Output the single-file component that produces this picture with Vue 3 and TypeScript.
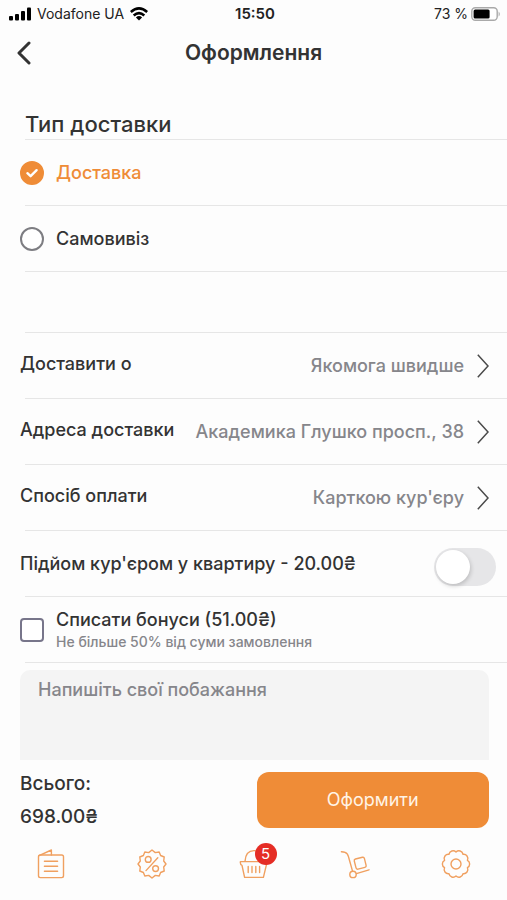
<script setup lang="ts">
import { ref } from 'vue'

interface Choice {
  id: string
  label: string
}

interface Setting {
  id: string
  label: string
  value: string
}

const deliveryTypes: Choice[] = [
  { id: 'delivery', label: 'Доставка' },
  { id: 'pickup', label: 'Самовивіз' },
]

const settings: Setting[] = [
  { id: 'time', label: 'Доставити о', value: 'Якомога швидше' },
  { id: 'address', label: 'Адреса доставки', value: 'Академика Глушко просп., 38' },
  { id: 'payment', label: 'Спосіб оплати', value: "Карткою кур'єру" },
]

const deliveryType = ref<string>('delivery')
const lift = ref<boolean>(false)
const useBonuses = ref<boolean>(false)
const wishes = ref<string>('')
const cartCount = ref<number>(5)
</script>

<template>
  <div class="screen">
    <div class="status">
      <div class="status-side">
        <svg class="signal" viewBox="0 0 22 14" width="22" height="14">
          <rect x="0" y="9" width="4" height="4.5" rx="1" />
          <rect x="6" y="7" width="4" height="6.5" rx="1" />
          <rect x="12" y="4" width="4" height="9.5" rx="1" />
          <rect x="18" y="0.5" width="4" height="13" rx="1" />
        </svg>
        <span>Vodafone UA</span>
        <svg class="wifi" viewBox="0 0 18 14" width="18" height="14">
          <path d="M0.8 5Q9 -2.2 17.2 5" />
          <path d="M3.7 8.4Q9 3.8 14.3 8.4" />
          <path class="dot" d="M5.9 10.4Q9 7.8 12.1 10.4L9 13.6Z" />
        </svg>
      </div>
      <span class="clock">15:50</span>
      <div class="status-side status-end">
        <span>73 %</span>
        <svg viewBox="0 0 30 14" width="30" height="14">
          <rect x="0.8" y="0.8" width="25.4" height="12.4" rx="3.5" fill="#fff" stroke="#a9a9a9" stroke-width="1.4" />
          <rect x="2.6" y="2.4" width="16" height="9.2" rx="1.5" fill="#000" />
          <path d="M27.6 4.4Q30 7 27.6 9.6Z" fill="#a9a9a9" />
        </svg>
      </div>
    </div>

    <header class="bar">
      <button class="back" type="button" aria-label="Назад">
        <svg viewBox="0 0 16 24" width="16" height="24">
          <path d="M13 2L3 12L13 22" />
        </svg>
      </button>
      <h1 class="title">Оформлення</h1>
    </header>

    <main class="content">
      <fieldset class="types">
        <legend class="heading">Тип доставки</legend>
        <label v-for="type in deliveryTypes" :key="type.id" class="row choice">
          <span class="mark">
            <input v-model="deliveryType" class="radio" type="radio" name="delivery-type" :value="type.id" />
            <svg v-if="deliveryType === type.id" class="tick" viewBox="0 0 24 24" width="24" height="24">
              <path d="M7.4 12.2L10.6 15.2L16.6 9.2" />
            </svg>
          </span>
          <span :class="{ active: deliveryType === type.id }">{{ type.label }}</span>
        </label>
      </fieldset>
      <div class="gap"></div>

      <button v-for="item in settings" :key="item.id" class="row setting" type="button">
        <span class="label">{{ item.label }}</span>
        <span class="value">{{ item.value }}</span>
        <svg class="chevron" viewBox="0 0 12 24" width="12" height="24">
          <path d="M0.8 0.8L11 12L0.8 23.2" />
        </svg>
      </button>

      <label class="row lift">
        <span>Підйом кур'єром у квартиру - 20.00₴</span>
        <input v-model="lift" class="switch" type="checkbox" role="switch" />
      </label>

      <label class="row choice">
        <input v-model="useBonuses" class="box" type="checkbox" />
        <span class="bonus">
          <span>Списати бонуси (51.00₴)</span>
          <small class="hint">Не більше 50% від суми замовлення</small>
        </span>
      </label>

      <textarea v-model="wishes" class="wishes" aria-label="Побажання" placeholder="Напишіть свої побажання"></textarea>
    </main>

    <section class="summary">
      <div class="total">
        <span>Всього:</span>
        <span>698.00₴</span>
      </div>
      <button class="submit" type="button">Оформити</button>
    </section>

    <nav class="tabs">
      <a class="tab" href="#menu" aria-label="Меню">
        <svg viewBox="0 0 30 30" width="30" height="30">
          <rect x="2.5" y="6" width="25" height="22.6" rx="1.8" />
          <path d="M3 6.6L15.4 1V6" />
          <path d="M8.4 12.2H21.6M8.4 17.2H21.6M8.4 22.2H21.6" />
        </svg>
      </a>
      <a class="tab" href="#offers" aria-label="Акції">
        <svg viewBox="0 0 30 30" width="30" height="30">
          <path d="M15 1L18.3 3.6L22.2 3L23.6 6.5L27.2 8L26.7 12L29 15L26.7 18L27.2 22L23.6 23.5L22.2 27L18.3 26.4L15 29L11.7 26.4L7.8 27L6.4 23.5L2.8 22L3.3 18L1 15L3.3 12L2.8 8L6.4 6.5L7.8 3L11.7 3.6Z" />
          <circle cx="11.2" cy="10.4" r="2.9" />
          <circle cx="18.6" cy="19.6" r="2.9" />
          <path d="M20.8 8.8L9 21.6" />
        </svg>
      </a>
      <a class="tab" href="#cart" aria-label="Кошик">
        <span class="cart">
          <svg viewBox="0 0 30 30" width="30" height="30">
            <path d="M1.4 12.6H28.2L24.4 28.4H5.6L3 16.4Q1 15.6 1.4 12.6Z" />
            <path d="M6 12.4C6.4 5 10 1.6 15 1.6S23.6 5 24 12.4" />
            <path d="M9.2 17.4V23.6M13 17.4V23.6M16.8 17.4V23.6M20.6 17.4V23.6" />
          </svg>
          <span class="badge">{{ cartCount }}</span>
        </span>
      </a>
      <a class="tab" href="#orders" aria-label="Замовлення">
        <svg viewBox="0 0 30 30" width="30" height="30">
          <path d="M1.4 2.8Q5.8 3 7.4 5.2Q8.6 7.4 9.4 11L12.6 22.4" />
          <circle cx="13" cy="25.4" r="3.2" />
          <path d="M16.4 24.6L29 20.8" />
          <rect x="15" y="9" width="10.4" height="10.4" rx="1.6" transform="rotate(-14 20.2 14.2)" />
        </svg>
      </a>
      <a class="tab" href="#settings" aria-label="Налаштування">
        <svg viewBox="0 0 30 30" width="30" height="30">
          <path d="M15 3A4.2 4.2 0 0 1 22.05 5.29A4.2 4.2 0 0 1 26.41 11.29A4.2 4.2 0 0 1 26.41 18.71A4.2 4.2 0 0 1 22.05 24.71A4.2 4.2 0 0 1 15 27A4.2 4.2 0 0 1 7.95 24.71A4.2 4.2 0 0 1 3.59 18.71A4.2 4.2 0 0 1 3.59 11.29A4.2 4.2 0 0 1 7.95 5.29A4.2 4.2 0 0 1 15 3Z" />
          <circle cx="15" cy="15" r="5" />
        </svg>
      </a>
    </nav>
  </div>
</template>

<style>
body {
  background: #fdfdfd;
}
</style>

<style scoped>
.screen {
  display: flex;
  flex-direction: column;
  min-height: 100vh;
  box-sizing: border-box;
  background: #fdfdfd;
  color: #333;
  font-family: Inter, "Noto Sans", sans-serif;
  font-size: 18px;
  font-weight: 500;
  line-height: 24px;
}

button {
  font: inherit;
  color: inherit;
  background: none;
  border: 0;
  padding: 0;
  cursor: pointer;
}

.status {
  display: grid;
  grid-template-columns: 1fr auto 1fr;
  align-items: center;
  height: 28px;
  padding: 0 6px 0 9px;
  font-size: 14px;
  font-weight: 400;
  color: #222;
}

.status-side {
  display: flex;
  align-items: center;
  gap: 6px;
}

.status-end {
  justify-content: flex-end;
  gap: 3px;
}

.signal {
  fill: #000;
}

.wifi {
  fill: none;
  stroke: #000;
  stroke-width: 2.6;
}

.wifi .dot {
  fill: #000;
  stroke: none;
}

.clock {
  font-size: 15px;
  font-weight: 600;
}

.bar {
  display: grid;
  grid-template-columns: 40px 1fr 40px;
  align-items: center;
  height: 50px;
  padding: 0 12px;
}

.back {
  display: flex;
  padding: 4px;
}

.back svg {
  fill: none;
  stroke: #333;
  stroke-width: 3;
  stroke-linecap: round;
  stroke-linejoin: round;
}

.title {
  margin: 0;
  text-align: center;
  font-size: 21px;
  font-weight: 600;
}

.content {
  display: flex;
  flex-direction: column;
  padding-top: 30px;
}

.types {
  min-width: 0;
  margin: 0;
  padding: 0;
  border: 0;
}

.heading {
  width: 100%;
  box-sizing: border-box;
  padding: 0 0 0 25px;
  font-size: 22px;
  line-height: 32px;
}

.heading::after,
.row::after,
.gap::after {
  content: "";
  display: block;
  height: 1px;
  background: #e6e6e6;
}

.heading::after {
  margin-top: -1px;
}

.row,
.gap {
  position: relative;
}

.row::after,
.gap::after {
  position: absolute;
  left: 25px;
  right: 0;
  bottom: 0;
}

.row {
  display: flex;
  align-items: center;
  width: 100%;
  height: 66px;
  box-sizing: border-box;
  padding: 0 18px 0 20px;
  text-align: left;
  cursor: pointer;
}

.gap {
  height: 61px;
}

.choice {
  gap: 12px;
}

.mark {
  display: grid;
}

.mark > * {
  grid-area: 1 / 1;
}

.radio,
.box {
  appearance: none;
  width: 24px;
  height: 24px;
  margin: 0;
  border: 2px solid #7d7d82;
  border-radius: 50%;
  background: #fff;
}

.box {
  flex: none;
  border-color: #77758a;
  border-radius: 4px;
}

.radio:checked,
.box:checked {
  border-color: #ef8c37;
  background: #ef8c37;
}

.tick {
  fill: none;
  stroke: #fff;
  stroke-width: 2.4;
  stroke-linecap: round;
  stroke-linejoin: round;
  pointer-events: none;
}

.active {
  color: #ef8c37;
}

.label {
  flex: none;
  padding-bottom: 4px;
}

.value {
  flex: 1;
  margin-right: 13px;
  text-align: right;
  color: #86868b;
}

.chevron {
  flex: none;
  fill: none;
  stroke: #4a4a4a;
  stroke-width: 1.5;
}

.lift {
  justify-content: space-between;
  padding-right: 11px;
}

.switch {
  appearance: none;
  width: 62px;
  height: 38px;
  margin: 6px 0 0;
  padding: 2px;
  box-sizing: border-box;
  border-radius: 19px;
  background: #e6e6e8;
}

.switch::before {
  content: "";
  display: block;
  width: 34px;
  height: 34px;
  border-radius: 50%;
  background: #fff;
  box-shadow: 1px 2px 4px rgba(0, 0, 0, 0.18);
}

.switch:checked {
  background: #ef8c37;
}

.switch:checked::before {
  margin-left: auto;
}

.bonus {
  display: flex;
  flex-direction: column;
}

.hint {
  font-size: 14px;
  line-height: 20px;
  color: #86868b;
}

.wishes {
  height: 90px;
  box-sizing: border-box;
  margin: 7px 18px 0 20px;
  padding: 8px 18px;
  border: 0;
  border-radius: 10px 10px 0 0;
  background: #f4f4f4;
  color: #333;
  font: inherit;
  resize: none;
}

.wishes::placeholder {
  color: #86868b;
  opacity: 1;
}

.summary {
  display: grid;
  grid-template-columns: 1fr 1fr;
  gap: 4px;
  padding: 12px 18px 0 20px;
}

.total {
  display: flex;
  flex-direction: column;
  gap: 9px;
  font-size: 19px;
}

.submit {
  height: 56px;
  border-radius: 12px;
  background: #ef8c37;
  color: #fff4e6;
  font-size: 18px;
  font-weight: 400;
}

.tabs {
  display: flex;
  padding-top: 20px;
  padding-bottom: 20px;
}

.tab {
  flex: 1;
  display: flex;
  justify-content: center;
}

.tab svg {
  display: block;
  fill: none;
  stroke: #f0a060;
  stroke-width: 1.4;
  stroke-linecap: round;
  stroke-linejoin: round;
}

.cart {
  position: relative;
}

.badge {
  position: absolute;
  top: -6px;
  left: 16px;
  width: 22px;
  height: 22px;
  border-radius: 50%;
  background: #e52d25;
  color: #fff;
  text-align: center;
  font-size: 15px;
  font-weight: 400;
  line-height: 22px;
}
</style>
